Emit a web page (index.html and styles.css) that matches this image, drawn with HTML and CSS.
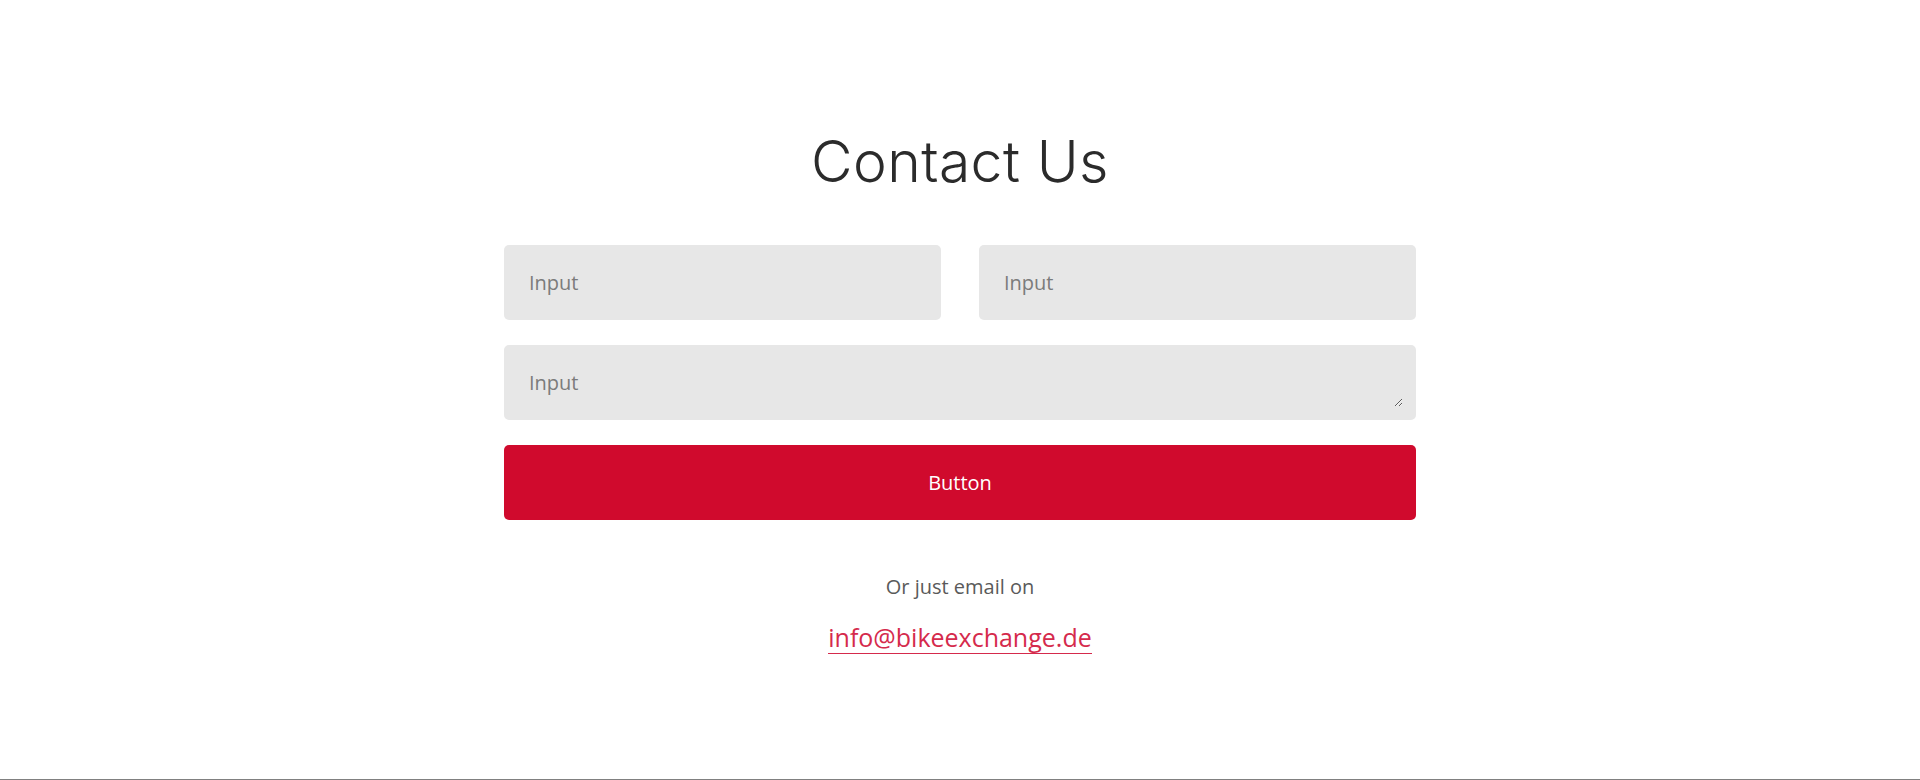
FILE: index.html
```html
<!DOCTYPE html>
<html>
<head>
<meta charset="utf-8">
<link rel="stylesheet" href="styles.css">
</head>
<body>
<main class="page">
  <section class="contact">
    <h1 class="title">Contact Us</h1>
    <form class="form">
      <div class="row">
        <input class="field" type="text" placeholder="Input">
        <input class="field" type="text" placeholder="Input">
      </div>
      <textarea class="field area" placeholder="Input"></textarea>
      <button class="btn" type="button">Button</button>
    </form>
    <p class="alt">Or just email on</p>
    <a class="mail" href="#">info@bikeexchange.de</a>
  </section>
</main>
</body>
</html>
```

FILE: styles.css
```css
html, body {
  margin: 0;
  padding: 0;
  background: #fff;
}
body {
  font-family: "Open Sans", "Liberation Sans", sans-serif;
}
.page {
  height: 779px;
  border-bottom: 1px solid #808080;
  display: flex;
  justify-content: center;
}
.contact {
  width: 912px;
  padding-top: 122px;
  display: flex;
  flex-direction: column;
  align-items: center;
}
.title {
  margin: 0;
  font-family: "Inter", "Lato", sans-serif;
  font-weight: 300;
  font-size: 57px;
  line-height: 80px;
  color: #2b2b2b;
  letter-spacing: 0.4px;
}
.form {
  width: 100%;
  margin-top: 43px;
  display: flex;
  flex-direction: column;
  gap: 25px;
}
.row {
  display: flex;
  gap: 38px;
}
.field {
  flex: 1;
  box-sizing: border-box;
  height: 75px;
  min-width: 0;
  border: none;
  border-radius: 5px;
  background: #e7e7e7;
  padding: 0 25px;
  font-family: "Open Sans", sans-serif;
  font-size: 20px;
  color: #333;
  outline: none;
}
.field::placeholder {
  color: #7b7b7b;
}
.area {
  flex: none;
  width: 100%;
  resize: vertical;
  border: 13px solid #e7e7e7;
  padding: 7px 12px 5px;
  line-height: 36px;
  display: block;
}
.btn {
  height: 75px;
  border: none;
  border-radius: 5px;
  background: #d00a2d;
  color: #fff;
  font-family: "Open Sans", sans-serif;
  font-size: 20px;
  cursor: pointer;
}
.alt {
  margin: 52px 0 0;
  font-size: 20px;
  line-height: 30px;
  color: #5a5a5a;
}
.mail {
  margin-top: 19px;
  font-size: 25px;
  line-height: 32px;
  color: #d52a4c;
  text-decoration: none;
  border-bottom: 1px solid #d52a4c;
}
```
